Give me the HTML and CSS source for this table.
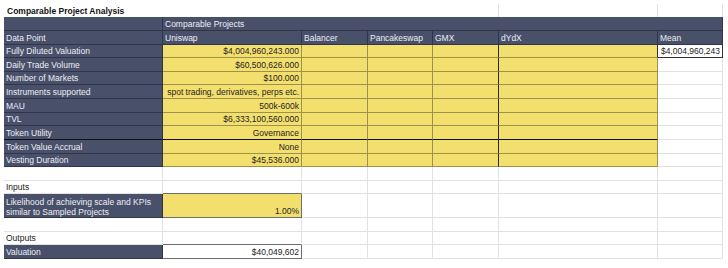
FILE: index.html
```html
<!DOCTYPE html>
<html>
<head>
<meta charset="utf-8">
<link rel="stylesheet" href="styles.css">
</head>
<body>
<div class="sheet">
  <!-- row 0: title -->
  <div class="c title span5">Comparable Project Analysis</div>
  <div class="c top"></div>
  <div class="c top"></div>

  <!-- row 1 -->
  <div class="c hd"></div>
  <div class="c hd span6">Comparable Projects</div>

  <!-- row 2 -->
  <div class="c hd">Data Point</div>
  <div class="c hd">Uniswap</div>
  <div class="c hd">Balancer</div>
  <div class="c hd">Pancakeswap</div>
  <div class="c hd">GMX</div>
  <div class="c hd">dYdX</div>
  <div class="c hd">Mean</div>

  <!-- row 3 -->
  <div class="c hd">Fully Diluted Valuation</div>
  <div class="c yl r">$4,004,960,243.000</div>
  <div class="c yl"></div>
  <div class="c yl"></div>
  <div class="c yl gmx"></div>
  <div class="c yl br-box"></div>
  <div class="c mean r">$4,004,960,243</div>

  <!-- row 4 -->
  <div class="c hd">Daily Trade Volume</div>
  <div class="c yl r">$60,500,626.000</div>
  <div class="c yl"></div>
  <div class="c yl"></div>
  <div class="c yl gmx"></div>
  <div class="c yl"></div>
  <div class="c wh"></div>

  <!-- row 5 -->
  <div class="c hd">Number of Markets</div>
  <div class="c yl r">$100.000</div>
  <div class="c yl"></div>
  <div class="c yl"></div>
  <div class="c yl gmx"></div>
  <div class="c yl"></div>
  <div class="c wh"></div>

  <!-- row 6 -->
  <div class="c hd">Instruments supported</div>
  <div class="c yl r">spot trading, derivatives, perps etc.</div>
  <div class="c yl"></div>
  <div class="c yl"></div>
  <div class="c yl gmx"></div>
  <div class="c yl"></div>
  <div class="c wh"></div>

  <!-- row 7 -->
  <div class="c hd">MAU</div>
  <div class="c yl r">500k-600k</div>
  <div class="c yl"></div>
  <div class="c yl"></div>
  <div class="c yl gmx"></div>
  <div class="c yl"></div>
  <div class="c wh"></div>

  <!-- row 8 -->
  <div class="c hd">TVL</div>
  <div class="c yl r">$6,333,100,560.000</div>
  <div class="c yl"></div>
  <div class="c yl"></div>
  <div class="c yl gmx"></div>
  <div class="c yl"></div>
  <div class="c wh"></div>

  <!-- row 9 -->
  <div class="c hd bb-black">Token Utility</div>
  <div class="c yl r bb-black">Governance</div>
  <div class="c yl bb-black"></div>
  <div class="c yl bb-black"></div>
  <div class="c yl gmx bb-black"></div>
  <div class="c yl bb-black"></div>
  <div class="c wh"></div>

  <!-- row 10 -->
  <div class="c hd">Token Value Accrual</div>
  <div class="c yl r">None</div>
  <div class="c yl"></div>
  <div class="c yl"></div>
  <div class="c yl gmx"></div>
  <div class="c yl"></div>
  <div class="c wh"></div>

  <!-- row 11 -->
  <div class="c hd">Vesting Duration</div>
  <div class="c yl r">$45,536.000</div>
  <div class="c yl"></div>
  <div class="c yl"></div>
  <div class="c yl gmx"></div>
  <div class="c yl"></div>
  <div class="c wh"></div>

  <!-- row 12 -->
  <div class="c wh"></div>
  <div class="c wh"></div>
  <div class="c wh"></div>
  <div class="c wh"></div>
  <div class="c wh"></div>
  <div class="c wh"></div>
  <div class="c wh"></div>

  <!-- row 13 -->
  <div class="c wh">Inputs</div>
  <div class="c wh bb-box"></div>
  <div class="c wh"></div>
  <div class="c wh"></div>
  <div class="c wh"></div>
  <div class="c wh"></div>
  <div class="c wh"></div>

  <!-- row 14 -->
  <div class="c hd multi">Likelihood of achieving scale and KPIs<br>similar to Sampled Projects</div>
  <div class="c yl r boxed">1.00%</div>
  <div class="c wh"></div>
  <div class="c wh"></div>
  <div class="c wh"></div>
  <div class="c wh"></div>
  <div class="c wh"></div>

  <!-- row 15 -->
  <div class="c wh"></div>
  <div class="c wh"></div>
  <div class="c wh"></div>
  <div class="c wh"></div>
  <div class="c wh"></div>
  <div class="c wh"></div>
  <div class="c wh"></div>

  <!-- row 16 -->
  <div class="c wh">Outputs</div>
  <div class="c wh bb-box"></div>
  <div class="c wh"></div>
  <div class="c wh"></div>
  <div class="c wh"></div>
  <div class="c wh"></div>
  <div class="c wh"></div>

  <!-- row 17 -->
  <div class="c hd">Valuation</div>
  <div class="c wh r boxed">$40,049,602</div>
  <div class="c wh"></div>
  <div class="c wh"></div>
  <div class="c wh"></div>
  <div class="c wh"></div>
  <div class="c wh"></div>
</div>
</body>
</html>
```

FILE: styles.css
```css
html, body {
  margin: 0;
  padding: 0;
  background: #ffffff;
}

.sheet {
  display: grid;
  grid-template-columns: 159px 139px 66px 65px 66px 159px 65px;
  grid-template-rows: 13px 14px 14px 13px 14px 13px 14px 14px 13px 14px 14px 13px 14px 13px 24px 14px 13px 14px;
  margin: 4px 0 0 4px;
  width: 719px;
  font-family: "Liberation Sans", Arial, sans-serif;
  font-size: 8.5px;
  line-height: 10px;
  color: #222222;
}

.c {
  box-sizing: border-box;
  display: flex;
  align-items: flex-end;
  padding: 0 2px 1px 2px;
  white-space: nowrap;
  overflow: hidden;
  border-right: 1px solid #e2e2e2;
  border-bottom: 1px solid #e2e2e2;
}

.r {
  justify-content: flex-end;
}

.span5 { grid-column: span 5; }
.span6 { grid-column: span 6; }

.title {
  font-weight: bold;
  color: #111111;
  padding-left: 3px;
  border-bottom: none;
}

.top {
  border-bottom: none;
}

.hd {
  background: #495069;
  color: #eceef4;
  border-right-color: #30354a;
  border-bottom-color: #30354a;
}

.yl {
  background: #f3df6e;
  color: #1e1e1e;
  border-right-color: #9e914c;
  border-bottom-color: #9e914c;
}

.gmx {
  border-right-color: #2a2a2a;
}

.bb-black {
  border-bottom-color: #111111;
}

.br-box {
  border-right-color: #333333;
}

.bb-box {
  border-bottom-color: #6e6e6e;
}

.wh {
  background: #ffffff;
}

.mean {
  background: #ffffff;
  color: #1e1e1e;
  border-right-color: #333333;
  border-bottom-color: #333333;
}

.boxed {
  border-right-color: #6e6e6e;
  border-bottom-color: #6e6e6e;
}

.multi {
  display: block;
  padding-top: 3px;
}
```
